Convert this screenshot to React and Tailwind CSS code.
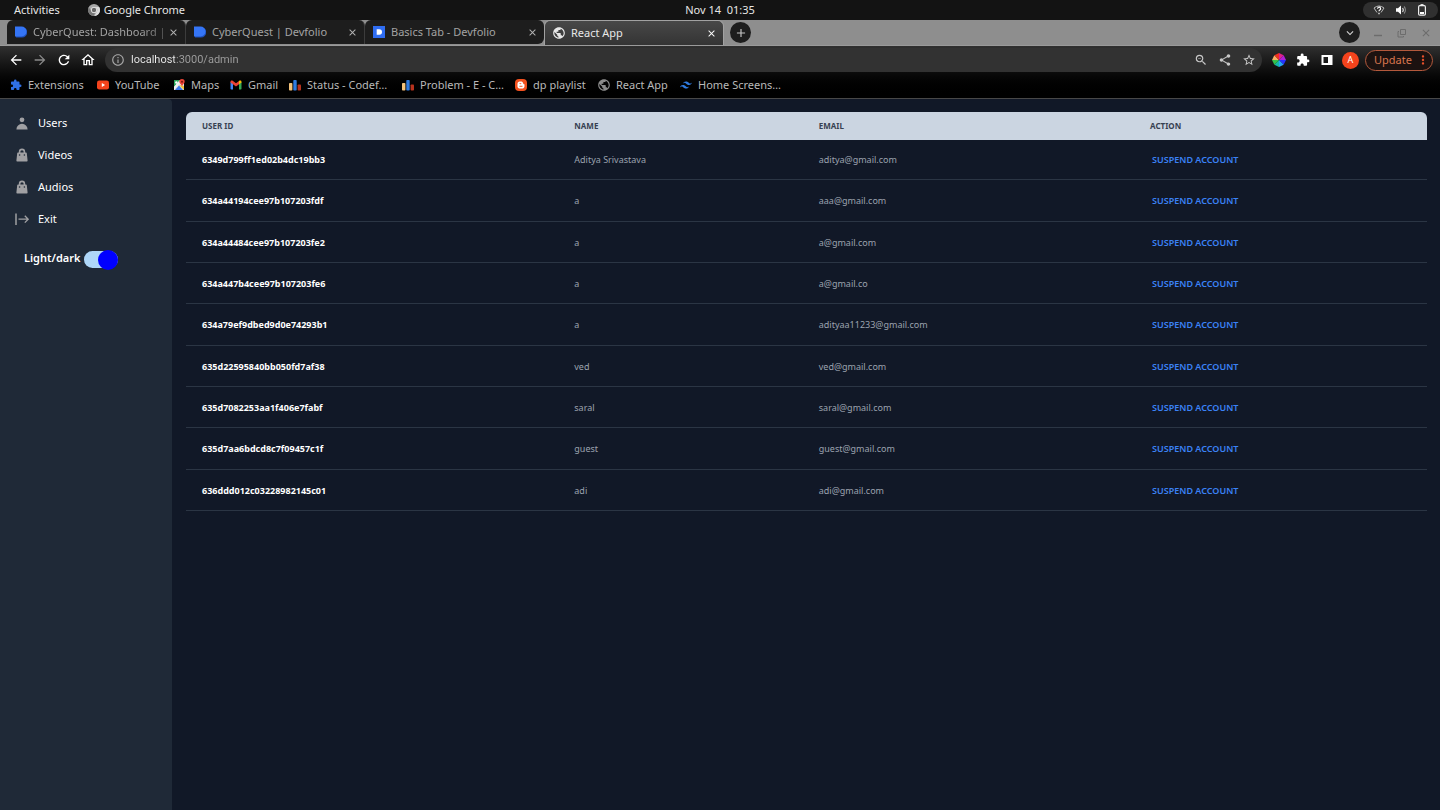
import React from "react";
import {
  MdArrowBack,
  MdArrowForward,
  MdClose,
  MdExpandMore,
  MdExtension,
  MdInfoOutline,
  MdOutlineHome,
  MdPublic,
  MdRefresh,
  MdShare,
  MdStarBorder,
  MdZoomOut,
  MdAdd,
  MdMoreVert,
} from "react-icons/md";
import { FaBloggerB } from "react-icons/fa";
import { SiTailwindcss } from "react-icons/si";

function Devfolio() {
  return (
    <svg viewBox="0 0 12 12" className="size-3 shrink-0" aria-hidden="true">
      <path d="M1 1h6a5.300 5.300 0 0 1 0 10.600H1z" fill="#1d4fb8" />
      <path d="M0 .5h6.500a5 5 0 0 1 0 10H0z" fill="#3575f6" />
    </svg>
  );
}

function DevfolioSquare() {
  return (
    <svg viewBox="0 0 12 12" className="size-3 shrink-0" aria-hidden="true">
      <path d="M0 0h12v12H0z" fill="#2f6df2" />
      <path d="M3.700 3.300h2.600a2.700 2.700 0 0 1 0 5.400H3.700z" fill="#fff" />
    </svg>
  );
}

function Globe() {
  return (
    <span className="flex size-3 shrink-0 items-center justify-center">
      <MdPublic className="size-3.5 shrink-0" />
    </span>
  );
}

function ChromeMark() {
  return (
    <svg viewBox="0 0 12 12" className="size-3" aria-hidden="true">
      <circle cx="6" cy="6" r="6" fill="#a9a9a9" />
      <path d="M6 3h5.200A6 6 0 0 1 6.500 12l2.300-4.300A3 3 0 0 0 6 3z" fill="#dcdcdc" />
      <path d="M.8 3A6 6 0 0 0 5.500 12l1.700-3A3 3 0 0 1 3.400 7.500z" fill="#777" />
      <circle cx="6" cy="6" r="2.900" fill="#eee" />
      <circle cx="6" cy="6" r="2.200" fill="#666" />
    </svg>
  );
}

function YouTube() {
  return (
    <svg viewBox="0 0 12 12" className="size-3" aria-hidden="true">
      <rect y="1.500" width="12" height="9" rx="2.200" fill="#f4431c" />
      <path d="M4.800 4v4l3.300-2z" fill="#fff" />
    </svg>
  );
}

function Maps() {
  return (
    <svg viewBox="0 0 12 12" className="size-3" aria-hidden="true">
      <path d="M1 1h10v10H1z" fill="#e4e4e4" />
      <path d="M1 1h6L1 8z" fill="#2fa65a" />
      <path d="M2 11l4-4.500L10 11z" fill="#3b78e7" />
      <path d="M6 6l5 5V7z" fill="#f3c33c" />
      <path d="M1 8l5-6 1.500 1.500L1 10.500z" fill="#f2f2f2" />
      <circle cx="3.400" cy="3.500" r="1.200" fill="#fff" />
      <path d="M9 0a2.700 2.700 0 0 1 2.700 2.700C11.700 4.500 9.300 5.500 9 7.500 8.700 5.500 6.300 4.500 6.300 2.700A2.700 2.700 0 0 1 9 0z" fill="#ea4335" />
      <circle cx="9" cy="2.700" r="1" fill="#7d1710" />
    </svg>
  );
}

function Gmail() {
  return (
    <svg viewBox="0 0 12 12" className="size-3" aria-hidden="true">
      <path d="M.5 3h2.500v7.500H1.200a.7.700 0 0 1-.7-.7z" fill="#4285f4" />
      <path d="M9 3h2.500v6.800a.7.700 0 0 1-.7.700H9z" fill="#34a853" />
      <path d="M.5 3c0-1.400 1.400-1.800 2.500-1l3 2.300L9 2v3.300L6 7.600.5 3.600z" fill="#ea4335" />
      <path d="M9 2c1.100-.8 2.500-.4 2.500 1v.6L9 5.300z" fill="#fbbc04" />
    </svg>
  );
}

function Codeforces() {
  return (
    <svg viewBox="0 0 12 12" className="size-3" aria-hidden="true">
      <rect x="0" y="4" width="3.400" height="7.500" rx=".8" fill="#f3c27a" />
      <rect x="4.300" y="1" width="3.400" height="10.500" rx=".8" fill="#2f7be0" />
      <rect x="8.600" y="5.500" width="3.400" height="6" rx=".8" fill="#b7321d" />
    </svg>
  );
}

function Blogger() {
  return (
    <span className="flex size-3 items-center justify-center rounded-sm bg-[#f4511e] text-white">
      <FaBloggerB className="size-2" />
    </span>
  );
}

function ColorWheel() {
  return (
    <svg viewBox="0 0 12 12" className="size-3.5" aria-hidden="true">
      <path d="M6 6L6 0l4 2z" fill="#e0218a" />
      <path d="M6 6l4-4 2 4z" fill="#b01fd8" />
      <path d="M6 6h6l-2 4z" fill="#2733ff" />
      <path d="M6 6l4 4-4 2z" fill="#27a5f5" />
      <path d="M6 6v6l-4-2z" fill="#14b8a6" />
      <path d="M6 6l-4 4-2-4z" fill="#35c24a" />
      <path d="M6 6H0l2-4z" fill="#f4b266" />
      <path d="M6 6L2 2l4-2z" fill="#f0321e" />
    </svg>
  );
}

function SidePanel() {
  return (
    <svg viewBox="0 0 14 14" className="size-3.5" aria-hidden="true">
      <path d="M1.500 2h11v10h-11zM3.500 4v6h4.500V4z" fill="#fff" fillRule="evenodd" />
    </svg>
  );
}

function Wifi() {
  return (
    <svg viewBox="0 0 12 12" className="size-3" fill="none" stroke="#bbb" aria-hidden="true">
      <path d="M4 8.500L1 4a8 8 0 0 1 10 0L8 8.500" strokeWidth="1" />
      <path d="M4.600 4.800a1.500 1.500 0 1 1 2.200 1.200c-.5.300-.8.600-.8 1.200M6 8.800v1.400" stroke="#fff" strokeWidth="1.200" />
    </svg>
  );
}

function Volume() {
  return (
    <svg viewBox="0 0 12 12" className="size-3" fill="none" aria-hidden="true">
      <path d="M1 4.200h2L6 1.500v9L3 7.800H1z" fill="#fff" />
      <path d="M7.500 4.200a2.500 2.500 0 0 1 0 3.600" stroke="#eee" strokeWidth="1.100" />
      <path d="M9 2.500a5 5 0 0 1 0 7" stroke="#888" strokeWidth="1.100" />
    </svg>
  );
}

function Battery() {
  return (
    <svg viewBox="0 0 12 12" className="size-3" fill="none" aria-hidden="true">
      <path d="M4.500.8h3" stroke="#eee" strokeWidth="1.400" />
      <rect x="2.600" y="1.700" width="6.800" height="9.500" rx="1.200" stroke="#eee" strokeWidth="1.200" />
      <path d="M4 8h4v2H4z" fill="#fff" />
    </svg>
  );
}

function Person() {
  return (
    <svg viewBox="0 0 20 20" fill="currentColor" className="size-4" aria-hidden="true">
      <path fillRule="evenodd" d="M10 9a3 3 0 100-6 3 3 0 000 6zm-7 9a7 7 0 1114 0H3z" clipRule="evenodd" />
    </svg>
  );
}

function Bag() {
  return (
    <svg viewBox="0 0 20 20" fill="currentColor" className="size-4" aria-hidden="true">
      <path
        fillRule="evenodd"
        clipRule="evenodd"
        d="M10 2a4 4 0 00-4 4v1H5a1 1 0 00-.994.89l-1 9A1 1 0 004 18h12a1 1 0 00.994-1.110l-1-9A1 1 0 0015 7h-1V6a4 4 0 00-4-4zm2 5V6a2 2 0 10-4 0v1h4zm-6 3a1 1 0 112 0 1 1 0 01-2 0zm7-1a1 1 0 100 2 1 1 0 000-2z"
      />
    </svg>
  );
}

function Exit() {
  return (
    <svg viewBox="0 0 16 16" fill="none" stroke="currentColor" className="size-4" aria-hidden="true">
      <path d="M2 2.500v11.500" strokeWidth="1.500" />
      <path d="M4.500 8.200H14M10.800 4.800L14.200 8.200l-3.400 3.400" strokeWidth="1.300" />
    </svg>
  );
}

const tabs = [
  { title: "CyberQuest: Dashboard |", Icon: Devfolio, faded: true },
  { title: "CyberQuest | Devfolio", Icon: Devfolio },
  { title: "Basics Tab - Devfolio", Icon: DevfolioSquare, last: true },
  { title: "React App", Icon: Globe, active: true },
];

const bookmarks = [
  { title: "Extensions", icon: <MdExtension className="size-3 text-[#2f6fe4]" />, width: "w-[87px]" },
  { title: "YouTube", icon: <YouTube />, width: "w-[76px]" },
  { title: "Maps", icon: <Maps />, width: "w-[57px]" },
  { title: "Gmail", icon: <Gmail />, width: "w-[59px]" },
  { title: "Status - Codef…", icon: <Codeforces />, width: "w-[113px]" },
  { title: "Problem - E - C…", icon: <Codeforces />, width: "w-[113px]" },
  { title: "dp playlist", icon: <Blogger />, width: "w-[83px]" },
  { title: "React App", icon: <span className="text-[#8a8a8a]"><Globe /></span>, width: "w-[82px]" },
  { title: "Home Screens…", icon: <SiTailwindcss className="size-3 text-[#2f7be0]" />, width: "w-[110px]" },
];

const users = [
  ["6349d799ff1ed02b4dc19bb3", "Aditya Srivastava", "aditya@gmail.com"],
  ["634a44194cee97b107203fdf", "a", "aaa@gmail.com"],
  ["634a44484cee97b107203fe2", "a", "a@gmail.com"],
  ["634a447b4cee97b107203fe6", "a", "a@gmail.co"],
  ["634a79ef9dbed9d0e74293b1", "a", "adityaa11233@gmail.com"],
  ["635d22595840bb050fd7af38", "ved", "ved@gmail.com"],
  ["635d7082253aa1f406e7fabf", "saral", "saral@gmail.com"],
  ["635d7aa6bdcd8c7f09457c1f", "guest", "guest@gmail.com"],
  ["636ddd012c03228982145c01", "adi", "adi@gmail.com"],
];

const menu = [
  { label: "Users", Icon: Person },
  { label: "Videos", Icon: Bag },
  { label: "Audios", Icon: Bag },
  { label: "Exit", Icon: Exit },
];

function SystemBar() {
  return (
    <div className="grid h-5 grid-cols-3 items-center bg-[#131313] text-[11px] text-[#e6e6e6]">
      <div className="flex items-center gap-7 pl-3.5">
        <button>Activities</button>
        <button className="flex items-center gap-1">
          <ChromeMark />
          Google Chrome
        </button>
      </div>
      <time className="text-center whitespace-pre">Nov 14  01:35</time>
      <div className="mr-0.5 flex h-4 w-[75px] items-center justify-between justify-self-end rounded-full bg-[#303030] px-2.5">
        <Wifi />
        <Volume />
        <Battery />
      </div>
    </div>
  );
}

function Tab({ title, Icon, active, faded, last }) {
  const shape = active
    ? "h-[25px] w-[180px] border border-b-0 border-[#a2a2a2] bg-linear-to-b from-[#484848] to-[#343434] text-[#e8e8e8]"
    : last
      ? "h-6 w-[179px] rounded-br-md bg-[#1d1d1d] text-[#a3a3a3]"
      : "h-6 w-[179px] border-r border-[#3c3c3c] bg-[#1d1d1d] text-[#a3a3a3]";
  return (
    <div className={`flex items-center gap-1.5 rounded-t-md pr-1.5 pl-2 ${shape}`}>
      <Icon />
      <span
        className={
          faded
            ? "flex-1 text-[11px] whitespace-nowrap [mask-image:linear-gradient(to_right,#000_80%,#0006)]"
            : "flex-1 text-[11px] whitespace-nowrap"
        }
      >
        {title}
      </span>
      <button aria-label="Close tab" className={active ? "-ml-1 text-white" : "-ml-1 text-[#b4b4b4]"}>
        <MdClose className="size-[11px]" />
      </button>
    </div>
  );
}

function TabStrip() {
  return (
    <div className="flex h-[26px] items-start border-b border-[#9a9a9a] bg-[#8e8e8e] pl-[7px]">
      {tabs.map((t) => (
        <Tab key={t.title} {...t} />
      ))}
      <button
        aria-label="New tab"
        className="mt-0.5 ml-1.5 flex size-[21px] items-center justify-center rounded-full bg-[#1d1d1d] text-[#c4c4c4]"
      >
        <MdAdd className="size-3.5" />
      </button>
      <div className="mt-0.5 mr-2 ml-auto flex h-[21px] items-center gap-3 text-[#6c6c6c]">
        <button aria-label="Search tabs" className="flex size-[21px] items-center justify-center rounded-full bg-[#1d1d1d] text-[#d0d0d0]">
          <MdExpandMore className="size-3.5" />
        </button>
        <button aria-label="Minimize">
          <svg viewBox="0 0 12 12" className="size-3" aria-hidden="true">
            <path d="M2 8.500h8" stroke="currentColor" strokeWidth="1.500" />
          </svg>
        </button>
        <button aria-label="Restore">
          <svg viewBox="0 0 12 12" className="size-3" fill="none" stroke="currentColor" aria-hidden="true">
            <path d="M4.500 2.500h5v5h-5zM3 4.500H2v5.500h5.500V9" />
          </svg>
        </button>
        <button aria-label="Close window">
          <MdClose className="size-3" />
        </button>
      </div>
    </div>
  );
}

function Toolbar() {
  return (
    <div className="flex h-7 items-center text-white">
      <div className="flex w-[105px] shrink-0 items-center gap-2 pl-2">
        <button aria-label="Back"><MdArrowBack className="size-4" /></button>
        <button aria-label="Forward" className="text-[#8a8a8a]"><MdArrowForward className="size-4" /></button>
        <button aria-label="Reload"><MdRefresh className="size-4" /></button>
        <button aria-label="Home"><MdOutlineHome className="size-4" /></button>
      </div>
      <div className="flex h-6 flex-1 items-center gap-2.5 rounded-full bg-[#323232] px-1.5 text-[#c8c8c8]">
        <MdInfoOutline className="size-3.5 text-[#a8a8a8]" />
        <input
          aria-label="Address"
          defaultValue="localhost:3000/admin"
          className="-ml-1 min-w-0 flex-1 bg-linear-to-r from-[#eeeeee] from-[44px] to-[#a0a0a0] to-[44px] bg-clip-text font-['Roboto',sans-serif] text-[11px] text-transparent outline-none"
        />
        <button aria-label="Zoom"><MdZoomOut className="size-3.5" /></button>
        <button aria-label="Share"><MdShare className="size-3.5" /></button>
        <button aria-label="Bookmark"><MdStarBorder className="size-3.5" /></button>
      </div>
      <div className="flex items-center gap-2.5 pr-[7px] pl-2.5">
        <button aria-label="Color picker"><ColorWheel /></button>
        <button aria-label="Extensions"><MdExtension className="size-3.5" /></button>
        <button aria-label="Side panel"><SidePanel /></button>
        <div className="-ml-0.5 flex items-center gap-1.5">
          <button className="flex size-[17px] items-center justify-center rounded-full bg-[#f4431c] text-[9px]">A</button>
          <button className="flex h-[21px] w-[68px] items-center justify-between rounded-full border border-[#b4593c] bg-[#1c1210] pr-0.5 pl-2 text-[11px] text-[#d9764f]">
            Update
            <MdMoreVert className="size-3.5 text-[#e8502a]" />
          </button>
        </div>
      </div>
    </div>
  );
}

function Bookmarks() {
  return (
    <nav aria-label="Bookmarks" className="flex h-6 items-center pb-0.5 pl-2.5 text-[11px] text-[#b9b9b9]">
      {bookmarks.map((b) => (
        <a key={b.title + b.width} href="#" className={`flex items-center gap-1.5 whitespace-nowrap ${b.width}`}>
          {b.icon}
          {b.title}
        </a>
      ))}
    </nav>
  );
}

function Sidebar() {
  return (
    <aside className="w-[172px] shrink-0 rounded-tr-sm bg-[#1f2937] px-3.5 pt-2 text-[11px] text-white">
      <ul>
        {menu.map(({ label, Icon }) => (
          <li key={label}>
            <a href="#" className="flex h-8 items-center gap-2">
              <span className="text-[#a0a0a3]"><Icon /></span>
              {label}
            </a>
          </li>
        ))}
      </ul>
      <div className="mt-3.5 flex items-center gap-1 pl-2.5">
        <label htmlFor="theme" className="font-semibold">Light/dark</label>
        <input
          id="theme"
          type="checkbox"
          defaultChecked
          className="mt-0.5 flex h-[17px] w-[34px] appearance-none items-center justify-end rounded-full bg-[#aed6f8] before:size-5 before:shrink-0 before:rounded-full before:bg-[#0000ff] before:content-['']"
        />
      </div>
    </aside>
  );
}

function UsersTable() {
  return (
    <table className="h-[399px] w-full table-fixed border-collapse text-left text-[9px]">
      <thead>
        <tr className="h-7 text-[8px] text-[#374151] uppercase">
          <th className="w-[30%] rounded-tl-md bg-[#cbd5e1] px-4">User ID</th>
          <th className="w-[19.7%] bg-[#cbd5e1] px-4">Name</th>
          <th className="w-[26.7%] bg-[#cbd5e1] px-4">Email</th>
          <th className="rounded-tr-md bg-[#cbd5e1] px-4">Action</th>
        </tr>
      </thead>
      <tbody>
        {users.map(([id, name, email]) => (
          <tr key={id} className="border-b border-[#2b3544] text-[#9ca3af]">
            <th scope="row" className="px-4 pt-px font-bold text-white">{id}</th>
            <td className="px-4 pt-px">{name}</td>
            <td className="px-4 pt-px">{email}</td>
            <td className="px-[18px] pt-px">
              <button className="font-semibold text-[#3b82f6] uppercase">Suspend account</button>
            </td>
          </tr>
        ))}
      </tbody>
    </table>
  );
}

export default function App() {
  return (
    <div className="flex min-h-screen flex-col bg-[#111827] font-['Noto_Sans',sans-serif]">
      <header>
        <SystemBar />
        <TabStrip />
        <div className="border-b border-[#484848] bg-linear-to-b from-[#303030] via-[#0c0c0c] to-black">
          <Toolbar />
          <Bookmarks />
        </div>
      </header>
      <div className="flex flex-1">
        <Sidebar />
        <main className="min-w-0 flex-1 px-3.5 pt-[13px] pr-[13px]">
          <UsersTable />
        </main>
      </div>
    </div>
  );
}
